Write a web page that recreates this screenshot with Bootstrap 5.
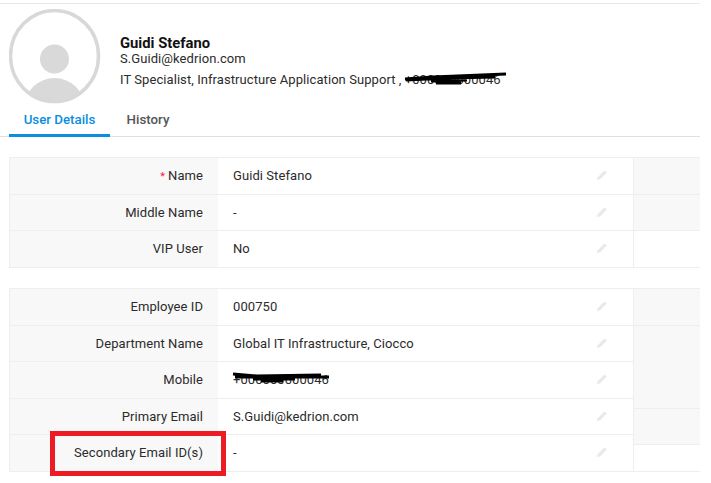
<!DOCTYPE html>
<html lang="en">
<head>
<meta charset="utf-8">
<title>User Details</title>
<link rel="stylesheet" href="https://cdn.jsdelivr.net/npm/bootstrap@5.3.0/dist/css/bootstrap.min.css">
<style>
html,body{background:#fff;overflow:hidden}
body{font-family:Roboto,"Liberation Sans",sans-serif;font-size:13px;letter-spacing:.07px;color:#2b2b2b;width:711px;height:483px}
.page-wrap{width:700px;margin-top:3px;border-top:1px solid #e9e9e9;padding-left:9px;position:relative}
.head-row{height:100px;padding-top:5px}
.avatar{width:92px;height:95px;flex:none}
.person{margin-left:19px;padding-top:26px}
.person-name{font-size:14.8px;font-weight:700;color:#111;line-height:16px;letter-spacing:0}
.person-mail{margin-bottom:6px;line-height:15px}
.person-role{line-height:16px}
.tabs-bar{margin-left:-9px;padding-left:9px;height:33px;border-bottom:1px solid #dfdfdf}
.tab-item{font-size:13.3px;font-weight:500;color:#555;line-height:19px;padding-top:6px;height:33px;text-align:center;text-decoration:none;letter-spacing:0}
.tab-on{width:101px;color:#0a8ee0;border-bottom:3px solid #0a8ee0}
.tab-off{width:76px}
.info-block{border-top:1px solid #eee;border-bottom:1px solid #eee;border-left:1px solid #eee}
.first-block{margin-top:20px}
.second-block{margin-top:20px}
.main-col{width:624px;flex:none;border-right:1px solid #eee}
.side-col{flex:1}
.info-row{height:36px;display:flex;border-top:1px solid #eee}
.info-row:first-child{border-top:0}
.info-row:nth-child(3),.info-row:nth-child(5){height:37px}
.label-cell{width:208px;flex:none;background:#f8f8f8;text-align:right;padding:0 15px 0 0;line-height:35px;white-space:nowrap}
.value-cell{flex:1;padding-left:15px;line-height:35px;white-space:nowrap;position:relative}
.pen{position:absolute;right:25px;top:11px;width:12px;height:12px}
.req{color:#e8264a;font-size:11px;margin-right:3px}
.side-cell{background:#f8f8f8;border-top:1px solid #eee;flex:none}
.side-cell:first-child{border-top:0}
.h36{height:36px}
.h83{height:83px}
.side-white{background:#fff;flex:1}
.scribble-host{position:relative;display:inline-block}
.scribble{position:absolute;left:-2px;top:0;pointer-events:none}
.scribble-low{top:9px}
.callout{position:absolute;left:50px;top:427px;width:176px;height:45px;border:5px solid #ed1c24}
</style>
</head>
<body>
<div class="page-wrap">
  <div class="head-row d-flex">
    <svg class="avatar" viewBox="0 0 92 95" aria-hidden="true">
      <defs><clipPath id="clipa"><ellipse cx="45.5" cy="47" rx="44" ry="45.5"/></clipPath></defs>
      <g clip-path="url(#clipa)">
        <circle cx="45.5" cy="50" r="14.5" fill="#d9d9d9"/>
        <ellipse cx="45.5" cy="97" rx="29.5" ry="28" fill="#d9d9d9"/>
      </g>
      <ellipse cx="45.5" cy="47" rx="44" ry="45.5" fill="none" stroke="#d8d8d8" stroke-width="3.5"/>
    </svg>
    <div class="person">
      <div class="person-name">Guidi Stefano</div>
      <div class="person-mail">S.Guidi@kedrion.com</div>
      <div class="person-role">IT Specialist, Infrastructure Application Support ,
        <span class="scribble-host">+000000000046
          <svg class="scribble" width="106" height="16" viewBox="0 0 106 16" aria-hidden="true"><path d="M2 7 L30 5 L103 2 M3 8 L44 6 L92 5 M28 9 L64 8 M33 11 L58 11" stroke="#000" stroke-width="3" fill="none"/></svg>
        </span>
      </div>
    </div>
  </div>
  <div class="tabs-bar d-flex">
    <a class="tab-item tab-on" href="#">User Details</a>
    <a class="tab-item tab-off" href="#">History</a>
  </div>

  <div class="info-block first-block d-flex">
    <div class="main-col">
      <div class="info-row"><div class="label-cell"><span class="req">*</span>Name</div><div class="value-cell">Guidi Stefano<svg class="pen" viewBox="0 0 12 12"><path d="M1 11 L1.6 8.2 L8.4 1.4 L10.8 3.6 L3.9 10.4 Z" fill="#e9e9e9"/></svg></div></div>
      <div class="info-row"><div class="label-cell">Middle Name</div><div class="value-cell">-<svg class="pen" viewBox="0 0 12 12"><path d="M1 11 L1.6 8.2 L8.4 1.4 L10.8 3.6 L3.9 10.4 Z" fill="#e9e9e9"/></svg></div></div>
      <div class="info-row"><div class="label-cell">VIP User</div><div class="value-cell">No<svg class="pen" viewBox="0 0 12 12"><path d="M1 11 L1.6 8.2 L8.4 1.4 L10.8 3.6 L3.9 10.4 Z" fill="#e9e9e9"/></svg></div></div>
    </div>
    <div class="side-col d-flex flex-column">
      <div class="side-cell h36"></div>
      <div class="side-cell h36"></div>
      <div class="side-cell side-white"></div>
    </div>
  </div>

  <div class="info-block second-block d-flex">
    <div class="main-col">
      <div class="info-row"><div class="label-cell">Employee ID</div><div class="value-cell">000750<svg class="pen" viewBox="0 0 12 12"><path d="M1 11 L1.6 8.2 L8.4 1.4 L10.8 3.6 L3.9 10.4 Z" fill="#e9e9e9"/></svg></div></div>
      <div class="info-row"><div class="label-cell">Department Name</div><div class="value-cell">Global IT Infrastructure, Ciocco<svg class="pen" viewBox="0 0 12 12"><path d="M1 11 L1.6 8.2 L8.4 1.4 L10.8 3.6 L3.9 10.4 Z" fill="#e9e9e9"/></svg></div></div>
      <div class="info-row"><div class="label-cell">Mobile</div><div class="value-cell"><span class="scribble-host">+000000000046
        <svg class="scribble scribble-low" width="102" height="16" viewBox="0 0 102 16" aria-hidden="true"><path d="M2 3 L26 5 L90 4 M4 6 L48 6 L98 6 M22 8 L64 8 M30 10 L52 10" stroke="#000" stroke-width="3" fill="none"/></svg></span><svg class="pen" viewBox="0 0 12 12"><path d="M1 11 L1.6 8.2 L8.4 1.4 L10.8 3.6 L3.9 10.4 Z" fill="#e9e9e9"/></svg></div></div>
      <div class="info-row"><div class="label-cell">Primary Email</div><div class="value-cell">S.Guidi@kedrion.com<svg class="pen" viewBox="0 0 12 12"><path d="M1 11 L1.6 8.2 L8.4 1.4 L10.8 3.6 L3.9 10.4 Z" fill="#e9e9e9"/></svg></div></div>
      <div class="info-row"><div class="label-cell">Secondary Email ID(s)</div><div class="value-cell">-<svg class="pen" viewBox="0 0 12 12"><path d="M1 11 L1.6 8.2 L8.4 1.4 L10.8 3.6 L3.9 10.4 Z" fill="#e9e9e9"/></svg></div></div>
    </div>
    <div class="side-col d-flex flex-column">
      <div class="side-cell h36"></div>
      <div class="side-cell h83"></div>
      <div class="side-cell h36"></div>
      <div class="side-cell side-white"></div>
    </div>
  </div>
  <div class="callout"></div>
</div>
</body>
</html>
